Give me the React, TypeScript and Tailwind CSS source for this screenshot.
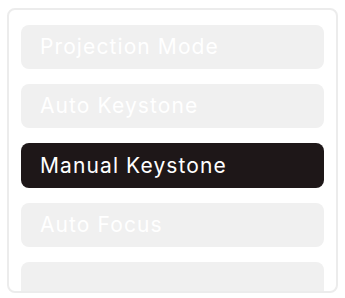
import React from 'react';

const items = ['Projection Mode', 'Auto Keystone', 'Manual Keystone', 'Auto Focus', ''];
const activeIndex = 2;

export default function App() {
  return (
    <div className="w-[345px] h-[298px] bg-white pt-2 px-[7px]" style={{ fontFamily: 'Inter, "Open Sans", sans-serif' }}>
      {/* Menu card */}
      <div className="h-[285px] overflow-hidden rounded-lg border-2 border-[#ececec] pt-[15px] px-[12px]">
        <ul className="flex flex-col gap-[15px]">
          {items.map((label, i) => (
            <li
              key={i}
              className={
                i === activeIndex
                  ? 'h-[45px] rounded-lg bg-[#1e1718] pl-[19px] flex items-center text-[21px] text-white tracking-[1.1px]'
                  : 'h-[44px] rounded-lg bg-[#f0f0f0] pl-[19px] flex items-center text-[21px] text-white tracking-[1.1px]'
              }
            >
              {label}
            </li>
          ))}
        </ul>
      </div>
    </div>
  );
}
